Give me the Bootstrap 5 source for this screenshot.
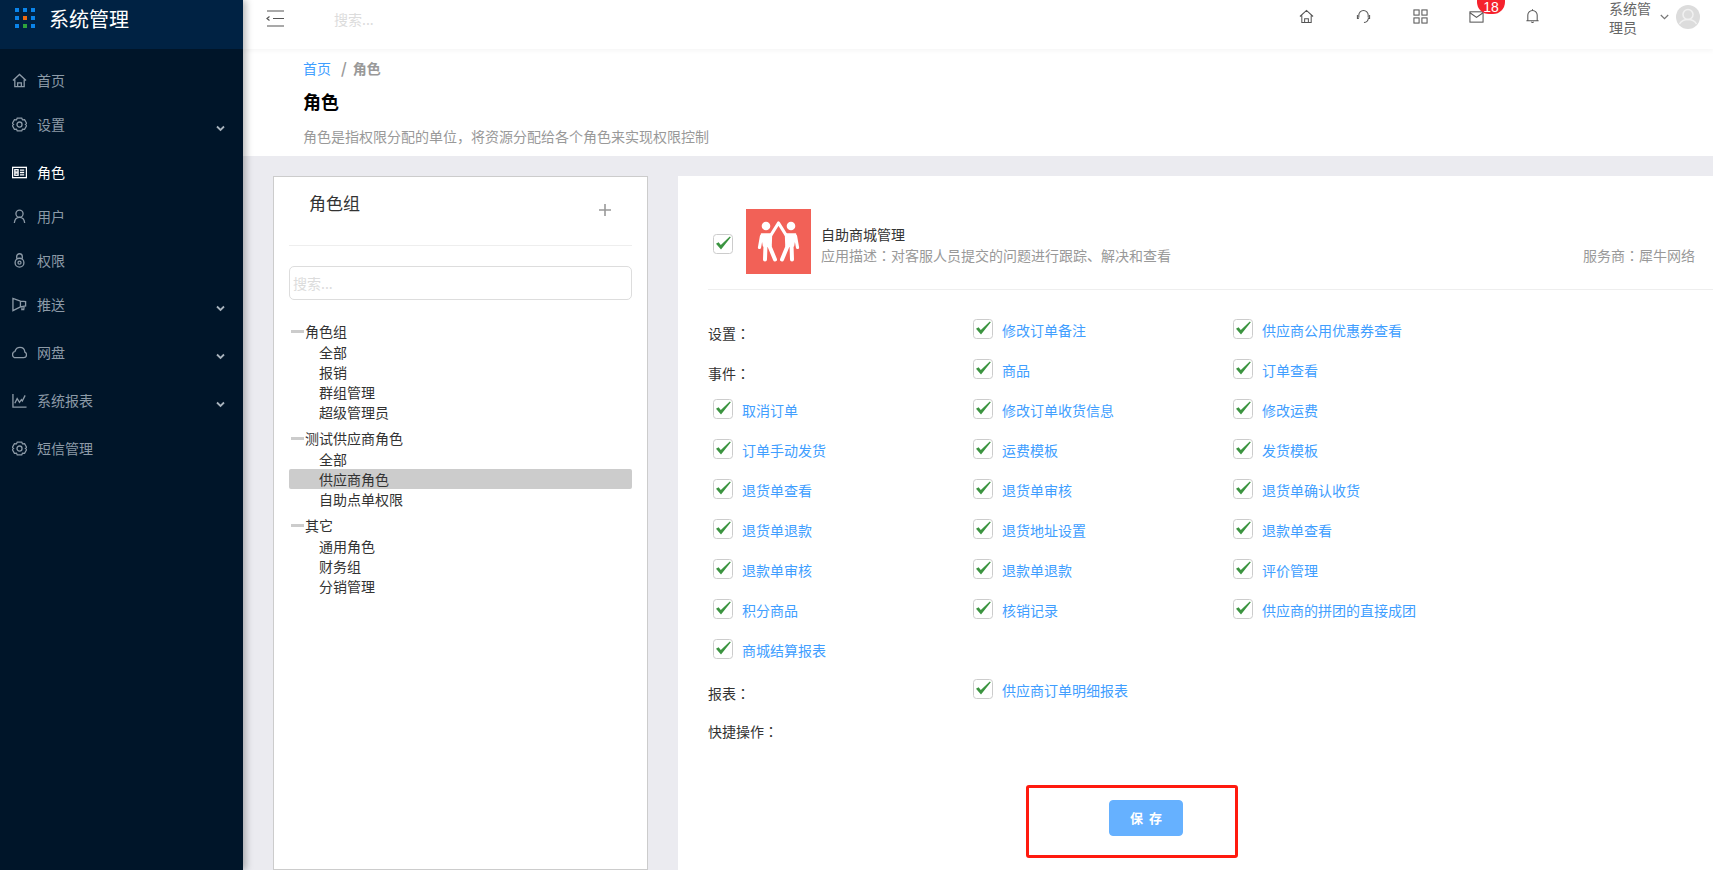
<!DOCTYPE html>
<html lang="zh">
<head>
<meta charset="utf-8">
<title>角色</title>
<link href="https://cdn.jsdelivr.net/npm/bootstrap@5.3.0/dist/css/bootstrap.min.css" rel="stylesheet">
<style>
html,body{height:870px;overflow:hidden}
body{font-family:"Noto Sans CJK SC","Liberation Sans",sans-serif;font-size:14px;background:#ebebf0;color:#333;position:relative}
.app-shell{height:870px}
.side-rail{width:243px;flex:0 0 243px;background:#001529;box-shadow:3px 0 7px rgba(0,0,0,.28);position:relative;z-index:3}
.side-brand{height:49px;background:#002243;color:#fff;font-size:20px;padding-left:15px;gap:14px;line-height:36px;padding-bottom:12px}
.brand-grid{display:grid;grid-template-columns:repeat(3,4px);grid-auto-rows:4px;gap:4px;margin-bottom:1px}
.brand-grid i{background:#0a84ea;display:block}
.brand-grid i.o{background:#f06a10}
.brand-grid i.g{background:#2ea33c}
.side-menu{padding-top:9px}
.side-link{height:44px;color:#8c9aa7;padding:0 0 0 12px;gap:10px;position:relative;line-height:20px}
.side-link:hover{color:#8c9aa7}
.side-link svg{width:15px;height:15px;flex:none;fill:none;stroke:currentColor;stroke-width:1.4}
.side-link.active-item{color:#fff}
.has-sub{margin-bottom:4px}
.sub-caret{position:absolute;right:18px;top:23px;width:9px!important;height:7px!important;stroke-width:1.8!important;color:#a8b3bd}
.main-col{min-width:0}
.top-strip{height:49px;background:#fff;box-shadow:0 2px 5px rgba(0,0,0,.04);padding:0;position:relative;z-index:2;flex-wrap:nowrap}
.menu-toggle{margin-left:23px;width:18px;height:17px;margin-bottom:12px;color:#555}
.top-search{margin-left:50px;color:#dcdcdc;margin-bottom:12px;width:200px;line-height:20px}
.top-tools{margin-left:auto;height:49px;width:470px;position:relative}
.tool-btn{width:15px;height:15px;position:absolute;top:9px;color:#555;fill:none;stroke:currentColor;stroke-width:1.1}
.tool-home{left:56px}.tool-head{left:113px}.tool-apps{left:170px}.tool-mail{left:226px}.tool-bell{left:282px}
.mail-count{position:absolute;top:-7px;left:234px;width:28px;height:21px;padding:7px 0 0;border-radius:0 0 12px 12px;background:#f5222d;font-family:"Liberation Sans",sans-serif;font-size:14px;font-weight:400;line-height:14px}
.user-name{position:absolute;left:366px;top:-1px;width:44px;font-size:14px;line-height:19px;color:#666}
.user-caret{position:absolute;left:417px;top:14px;width:9px;height:6px;fill:none;stroke:#777;stroke-width:1.2}
.user-face{position:absolute;left:433px;top:5px;width:24px;height:24px}
.page-head{height:107px;background:#fff;padding:9px 0 0 60px}
.crumb-trail{--bs-breadcrumb-divider:"/";--bs-breadcrumb-margin-bottom:0;line-height:20px}
.crumb-trail a{color:#409eff;text-decoration:none}
.crumb-trail .breadcrumb-item+.breadcrumb-item{padding-left:10px}
.crumb-trail .breadcrumb-item+.breadcrumb-item::before{padding-right:6px;font-size:15px}
.crumb-trail .breadcrumb-item.active,.crumb-trail .breadcrumb-item::before{color:#999!important;font-weight:700}
.page-title{font-size:18px;line-height:24px;font-weight:700;color:#000;margin:11px 0 13px}
.page-note{color:#999;line-height:20px;margin:0}
.work-area{padding:20px 0 0 30px;gap:30px;height:714px}
.role-panel{width:375px;flex:none;border:1px solid #ccc;border-radius:0;padding:0 15px;--bs-card-bg:#fff;height:694px}
.role-head{height:69px;border-bottom:1px solid #eee;position:relative}
.role-head h2{font-size:17px;font-weight:400;line-height:24px;margin:14px 0 0 20px;color:#333}
.add-role{position:absolute;right:21px;top:27px;width:12px;height:12px;stroke:#999;stroke-width:1.6;fill:none}
.role-search{margin-top:20px;height:34px;padding:0 3px;border:1px solid #ddd;border-radius:5px;font-size:14px;box-shadow:none}
.role-search::placeholder{color:#dcdcdc}
.role-tree{margin:21px 0 0;padding:0;list-style:none;color:#333}
.role-tree>li{margin-bottom:6px}
.tree-head{line-height:20px;padding-left:16px;position:relative;margin-bottom:1px}
.tree-head::before{content:"";position:absolute;left:2px;top:9px;width:13px;height:3px;background:#ccc}
.tree-kids{list-style:none;padding:0;margin:0}
.tree-kids li{line-height:20px;padding-left:30px}
.tree-kids li.picked{background:#ccc;border-radius:2px}
.app-panel{background:#fff;padding:0 0 0 30px;height:694px;flex:1;min-width:0;border-radius:0;border:0;position:relative}
.app-summary{height:114px;border-bottom:1px solid #eee;position:relative}
.app-tick{position:absolute;left:5px;top:58px}
.app-badge{position:absolute;left:38px;top:33px;width:65px;height:65px;background:#f26157}
.app-name{position:absolute;left:113px;top:48px;line-height:20px;color:#333}
.app-desc{position:absolute;left:113px;top:69px;line-height:20px;color:#999}
.app-vendor{position:absolute;right:18px;top:69px;line-height:20px;color:#999}
.hanzi-colon{font-family:"Noto Sans CJK TC","Noto Sans CJK SC",sans-serif}
.perm-grid{display:grid;grid-template-columns:260px 260px 1fr;grid-auto-rows:40px;margin-top:29px}
.perm-label{color:#333;padding-top:4px;line-height:20px}
.perm-label.last-label{padding-top:2px}
.perm-item{display:flex;align-items:flex-start;padding-left:5px;margin:0}
.perm-item a{color:#409eff;text-decoration:none;margin-left:9px;line-height:22px}
.tick-box{width:20px;height:20px;margin:0;flex:none;border:1px solid #ccc;border-radius:3px;background-color:#fff;box-shadow:none}
.form-check-input.tick-box:checked{background-color:#fff;border-color:#ccc;background-size:20px 20px;background-image:url("data:image/svg+xml,%3Csvg xmlns='http://www.w3.org/2000/svg' viewBox='0 0 20 20'%3E%3Cpath d='M3 9.800 5.600 8.300 7.800 11 16.800 2.500 17.800 3.200 8 15.500Z' fill='%233b9440'/%3E%3C/svg%3E")}
.save-row{position:absolute;left:431px;top:624px}
.save-btn{width:74px;height:36px;padding:0 0 0 6px;--bs-btn-bg:#66b1ff;--bs-btn-border-color:#66b1ff;--bs-btn-hover-bg:#66b1ff;--bs-btn-hover-border-color:#66b1ff;--bs-btn-font-size:13px;--bs-btn-font-weight:700;--bs-btn-border-radius:4px;letter-spacing:6px}
.red-callout{position:absolute;left:1026px;top:785px;width:212px;height:73px;border:3px solid #ff1a0f;border-radius:3px;z-index:5;pointer-events:none}
</style>
</head>
<body>
<div class="app-shell d-flex">
  <aside class="side-rail d-flex flex-column">
    <div class="side-brand d-flex align-items-center">
      <span class="brand-grid"><i></i><i></i><i></i><i></i><i class="o"></i><i></i><i></i><i class="g"></i><i></i></span>
      <span>系统管理</span>
    </div>
    <nav class="nav flex-column side-menu">
      <a class="nav-link side-link d-flex align-items-center" href="#"><svg viewBox="0 0 16 16"><path d="M1 8 8 1.5 15 8M3 7v7.500h10V7M6 14.500v-4h4v4"/></svg>首页</a>
      <a class="nav-link side-link has-sub d-flex align-items-center" href="#"><svg viewBox="0 0 16 16"><path d="M5.600 1.200h4.800l.9 1.900 2.100-.2 2.300 4-1.300 1.100 1.300 1.100-2.300 4-2.100-.2-.9 1.900H5.600l-.9-1.900-2.100.2-2.300-4L1.600 8 .3 6.900l2.300-4 2.100.2z"/><circle cx="8" cy="8" r="2.700"/></svg>设置<svg class="sub-caret" viewBox="0 0 9 7"><path d="M1 1.500 4.500 5 8 1.500"/></svg></a>
      <a class="nav-link side-link active-item d-flex align-items-center" href="#"><svg viewBox="0 0 16 16"><rect x=".6" y="2.500" width="14.800" height="11"/><rect x="3" y="5" width="3.500" height="2.500"/><rect x="3" y="8.500" width="3.500" height="2.500"/><path d="M8.500 5.500H13M8.500 8H13M8.500 10.500H13"/></svg>角色</a>
      <a class="nav-link side-link d-flex align-items-center" href="#"><svg viewBox="0 0 16 16"><circle cx="8" cy="5" r="3.800"/><path d="M2.500 15c.3-3.500 2.300-6 5.500-6s5.200 2.500 5.500 6"/></svg>用户</a>
      <a class="nav-link side-link d-flex align-items-center" href="#"><svg viewBox="0 0 16 16"><path d="M5 6V3.800a3 3 0 0 1 6 0V6"/><circle cx="8" cy="10.300" r="4.700"/><circle cx="8" cy="10.300" r="1.600"/></svg>权限</a>
      <a class="nav-link side-link has-sub d-flex align-items-center" href="#"><svg viewBox="0 0 16 16"><path d="M1 1.500v13l8-4 5.500-1V5l-5.500-.5zM9 4.500v6M11 10l-.5 3.500h2l.5-3.800"/></svg>推送<svg class="sub-caret" viewBox="0 0 9 7"><path d="M1 1.500 4.500 5 8 1.500"/></svg></a>
      <a class="nav-link side-link has-sub d-flex align-items-center" href="#"><svg viewBox="0 0 16 16"><path d="M4 13.500C1.800 13.500.6 12 .6 10c0-1.800 1.100-3 2.600-3.300C4 4 6 2.500 8.500 2.500c3 0 5 2.300 5.200 5 1.200.5 1.800 1.500 1.800 2.800 0 1.800-1.300 3.200-3 3.200z"/></svg>网盘<svg class="sub-caret" viewBox="0 0 9 7"><path d="M1 1.500 4.500 5 8 1.500"/></svg></a>
      <a class="nav-link side-link has-sub d-flex align-items-center" href="#"><svg viewBox="0 0 16 16"><path d="M1 1v14h14.500M3 11l2.500-5 2.500 4 2-3 1 1.500L14 2.500"/></svg>系统报表<svg class="sub-caret" viewBox="0 0 9 7"><path d="M1 1.500 4.500 5 8 1.500"/></svg></a>
      <a class="nav-link side-link d-flex align-items-center" href="#"><svg viewBox="0 0 16 16"><path d="M5.600 1.200h4.800l.9 1.900 2.100-.2 2.300 4-1.300 1.100 1.300 1.100-2.300 4-2.100-.2-.9 1.900H5.600l-.9-1.900-2.100.2-2.300-4L1.600 8 .3 6.900l2.300-4 2.100.2z"/><circle cx="8" cy="8" r="2.700"/></svg>短信管理</a>
    </nav>
  </aside>
  <div class="main-col flex-grow-1 d-flex flex-column">
    <header class="navbar top-strip align-items-center">
      <svg class="menu-toggle" viewBox="0 0 18 17" fill="none" stroke="currentColor" stroke-width="1.200"><path d="M1 1h17M7 8.500h11M1 16h17M3.500 6.500 1 8.500l2.500 2"/></svg>
      <span class="top-search">搜索...</span>
      <div class="top-tools">
        <svg class="tool-btn tool-home" viewBox="0 0 16 16"><path d="M1 8 8 1.500 15 8M3 7v7.500h10V7M6 14.500v-4h4v4"/></svg>
        <svg class="tool-btn tool-head" viewBox="0 0 16 16"><path d="M3 9V6.500a5 5 0 0 1 10 0V9M1.500 6.500v3.500h1.500M14.500 6.500v3.500H13M13 10c0 3-2 4-4.500 4.500"/></svg>
        <svg class="tool-btn tool-apps" viewBox="0 0 16 16"><rect x="1" y="1" width="5.500" height="5.500"/><rect x="9.500" y="1" width="5.500" height="5.500"/><rect x="1" y="9.500" width="5.500" height="5.500"/><rect x="9.500" y="9.500" width="5.500" height="5.500"/></svg>
        <svg class="tool-btn tool-mail" viewBox="0 0 16 16"><rect x="1" y="3" width="14" height="11"/><path d="m1 4 7 5 7-5"/></svg>
        <span class="badge mail-count">18</span>
        <svg class="tool-btn tool-bell" viewBox="0 0 16 16"><path d="M3 12.500V6.500a5 5 0 0 1 10 0v6M1.500 12.500h13M7 13.500a1 1 0 0 0 2 0M8 1V.3"/></svg>
        <span class="user-name">系统管理员</span>
        <svg class="user-caret" viewBox="0 0 9 6"><path d="M.8 1 4.500 4.700 8.200 1"/></svg>
        <svg class="user-face" viewBox="0 0 24 24"><circle cx="12" cy="12" r="12" fill="#dcdcdc"/><circle cx="12" cy="9.500" r="5" fill="none" stroke="#f1f1f1" stroke-width="1.500"/><path d="M3.500 19c2-3.500 5-4.500 8.500-4.500s6.500 1 8.500 4.500" fill="none" stroke="#f1f1f1" stroke-width="1.500"/></svg>
      </div>
    </header>
    <section class="page-head">
      <nav aria-label="breadcrumb"><ol class="breadcrumb crumb-trail"><li class="breadcrumb-item"><a href="#">首页</a></li><li class="breadcrumb-item active" aria-current="page">角色</li></ol></nav>
      <h1 class="page-title">角色</h1>
      <p class="page-note">角色是指权限分配的单位，将资源分配给各个角色来实现权限控制</p>
    </section>
    <section class="work-area d-flex">
      <div class="card role-panel">
        <div class="role-head">
          <h2>角色组</h2>
          <svg class="add-role" viewBox="0 0 12 12"><path d="M6 0v12M0 6h12"/></svg>
        </div>
        <input class="form-control role-search" type="text" placeholder="搜索...">
        <ul class="role-tree">
          <li><div class="tree-head">角色组</div><ul class="tree-kids"><li>全部</li><li>报销</li><li>群组管理</li><li>超级管理员</li></ul></li>
          <li><div class="tree-head">测试供应商角色</div><ul class="tree-kids"><li>全部</li><li class="picked">供应商角色</li><li>自助点单权限</li></ul></li>
          <li><div class="tree-head">其它</div><ul class="tree-kids"><li>通用角色</li><li>财务组</li><li>分销管理</li></ul></li>
        </ul>
      </div>
      <div class="card app-panel">
        <div class="app-summary">
          <input class="form-check-input tick-box app-tick" type="checkbox" checked aria-label="自助商城管理">
          <div class="app-badge">
            <svg viewBox="0 0 65 65" width="65" height="65" fill="none" stroke="#fff" stroke-linecap="round" stroke-linejoin="round"><circle cx="20" cy="17" r="4.300" fill="#fff" stroke="none"/><circle cx="45" cy="17" r="4.300" fill="#fff" stroke="none"/><path stroke-width="3.200" d="M15.500 27 13.500 38.500M49.500 27 51.500 38.500M25 26 32.500 14 40 26"/><path fill="#fff" stroke-width="1.500" d="M15.500 25h10l-.5 12h-7.500zM49.500 25h-10l.5 12h7.500z"/><path stroke-width="4" d="M19.500 36 19 50.500M23 36 29 50.500M45.500 36 46 50.500M42 36 36 50.500"/></svg>
          </div>
          <div class="app-name">自助商城管理</div>
          <div class="app-desc">应用描述<span class="hanzi-colon" lang="zh-Hant">：</span>对客服人员提交的问题进行跟踪、解决和查看</div>
          <div class="app-vendor">服务商<span class="hanzi-colon" lang="zh-Hant">：</span>犀牛网络</div>
        </div>
        <div class="perm-grid">
          <div class="perm-label">设置<span class="hanzi-colon" lang="zh-Hant">：</span></div>
          <label class="perm-item"><input class="form-check-input tick-box" type="checkbox" checked><a href="#">修改订单备注</a></label>
          <label class="perm-item"><input class="form-check-input tick-box" type="checkbox" checked><a href="#">供应商公用优惠券查看</a></label>
          <div class="perm-label">事件<span class="hanzi-colon" lang="zh-Hant">：</span></div>
          <label class="perm-item"><input class="form-check-input tick-box" type="checkbox" checked><a href="#">商品</a></label>
          <label class="perm-item"><input class="form-check-input tick-box" type="checkbox" checked><a href="#">订单查看</a></label>
          <label class="perm-item"><input class="form-check-input tick-box" type="checkbox" checked><a href="#">取消订单</a></label>
          <label class="perm-item"><input class="form-check-input tick-box" type="checkbox" checked><a href="#">修改订单收货信息</a></label>
          <label class="perm-item"><input class="form-check-input tick-box" type="checkbox" checked><a href="#">修改运费</a></label>
          <label class="perm-item"><input class="form-check-input tick-box" type="checkbox" checked><a href="#">订单手动发货</a></label>
          <label class="perm-item"><input class="form-check-input tick-box" type="checkbox" checked><a href="#">运费模板</a></label>
          <label class="perm-item"><input class="form-check-input tick-box" type="checkbox" checked><a href="#">发货模板</a></label>
          <label class="perm-item"><input class="form-check-input tick-box" type="checkbox" checked><a href="#">退货单查看</a></label>
          <label class="perm-item"><input class="form-check-input tick-box" type="checkbox" checked><a href="#">退货单审核</a></label>
          <label class="perm-item"><input class="form-check-input tick-box" type="checkbox" checked><a href="#">退货单确认收货</a></label>
          <label class="perm-item"><input class="form-check-input tick-box" type="checkbox" checked><a href="#">退货单退款</a></label>
          <label class="perm-item"><input class="form-check-input tick-box" type="checkbox" checked><a href="#">退货地址设置</a></label>
          <label class="perm-item"><input class="form-check-input tick-box" type="checkbox" checked><a href="#">退款单查看</a></label>
          <label class="perm-item"><input class="form-check-input tick-box" type="checkbox" checked><a href="#">退款单审核</a></label>
          <label class="perm-item"><input class="form-check-input tick-box" type="checkbox" checked><a href="#">退款单退款</a></label>
          <label class="perm-item"><input class="form-check-input tick-box" type="checkbox" checked><a href="#">评价管理</a></label>
          <label class="perm-item"><input class="form-check-input tick-box" type="checkbox" checked><a href="#">积分商品</a></label>
          <label class="perm-item"><input class="form-check-input tick-box" type="checkbox" checked><a href="#">核销记录</a></label>
          <label class="perm-item"><input class="form-check-input tick-box" type="checkbox" checked><a href="#">供应商的拼团的直接成团</a></label>
          <label class="perm-item"><input class="form-check-input tick-box" type="checkbox" checked><a href="#">商城结算报表</a></label>
          <div></div><div></div>
          <div class="perm-label">报表<span class="hanzi-colon" lang="zh-Hant">：</span></div>
          <label class="perm-item"><input class="form-check-input tick-box" type="checkbox" checked><a href="#">供应商订单明细报表</a></label>
          <div></div>
          <div class="perm-label last-label">快捷操作<span class="hanzi-colon" lang="zh-Hant">：</span></div>
        </div>
        <div class="save-row"><button type="button" class="btn btn-primary save-btn">保存</button></div>
      </div>
    </section>
  </div>
</div>
<div class="red-callout"></div>
</body>
</html>
